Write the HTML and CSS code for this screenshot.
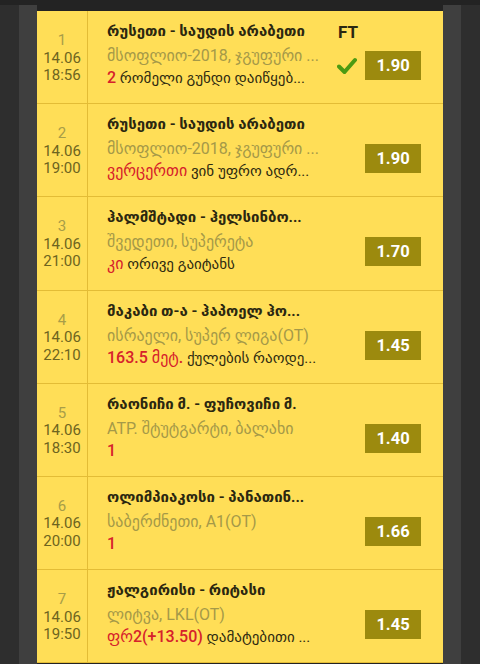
FILE: index.html
```html
<!DOCTYPE html>
<html>
<head>
<meta charset="utf-8">
<link rel="stylesheet" href="styles.css">
</head>
<body>
<div class="screen">
  <div class="side side-outer"></div>
  <div class="side side-inner"></div>
  <div class="main">
    <div class="list">
      <div class="row">
        <div class="num"><span class="idx">1</span><span>14.06</span><span>18:56</span></div>
        <div class="info">
          <div class="title">რუსეთი - საუდის არაბეთი</div>
          <div class="sub">მსოფლიო-2018, ჯგუფური ...</div>
          <div class="pick"><span class="red">2</span> რომელი გუნდი დაიწყებ...</div>
        </div>
        <div class="right">
          <div class="ft">FT</div>
          <div class="odds-line">
            <svg class="check" width="20" height="18" viewBox="0 0 20 18"><path d="M2 9.5 L7.5 15 L18 3" fill="none" stroke="#4c9a12" stroke-width="4" stroke-linecap="round" stroke-linejoin="round"/></svg>
            <div class="odd">1.90</div>
          </div>
        </div>
      </div>
      <div class="row">
        <div class="num"><span class="idx">2</span><span>14.06</span><span>19:00</span></div>
        <div class="info">
          <div class="title">რუსეთი - საუდის არაბეთი</div>
          <div class="sub">მსოფლიო-2018, ჯგუფური ...</div>
          <div class="pick"><span class="red">ვერცერთი</span> ვინ უფრო ადრ...</div>
        </div>
        <div class="right"><div class="odds-line"><div class="odd">1.90</div></div></div>
      </div>
      <div class="row">
        <div class="num"><span class="idx">3</span><span>14.06</span><span>21:00</span></div>
        <div class="info">
          <div class="title">ჰალმშტადი - ჰელსინბო...</div>
          <div class="sub">შვედეთი, სუპერეტა</div>
          <div class="pick"><span class="red">კი</span> ორივე გაიტანს</div>
        </div>
        <div class="right"><div class="odds-line"><div class="odd">1.70</div></div></div>
      </div>
      <div class="row">
        <div class="num"><span class="idx">4</span><span>14.06</span><span>22:10</span></div>
        <div class="info">
          <div class="title">მაკაბი თ-ა - ჰაპოელ ჰო...</div>
          <div class="sub">ისრაელი, სუპერ ლიგა(OT)</div>
          <div class="pick"><span class="red">163.5 მეტ.</span> ქულების რაოდე...</div>
        </div>
        <div class="right"><div class="odds-line"><div class="odd">1.45</div></div></div>
      </div>
      <div class="row">
        <div class="num"><span class="idx">5</span><span>14.06</span><span>18:30</span></div>
        <div class="info">
          <div class="title">რაონიჩი მ. - ფუჩოვიჩი მ.</div>
          <div class="sub">ATP. შტუტგარტი, ბალახი</div>
          <div class="pick"><span class="red">1</span></div>
        </div>
        <div class="right"><div class="odds-line"><div class="odd">1.40</div></div></div>
      </div>
      <div class="row">
        <div class="num"><span class="idx">6</span><span>14.06</span><span>20:00</span></div>
        <div class="info">
          <div class="title">ოლიმპიაკოსი - პანათინ...</div>
          <div class="sub">საბერძნეთი, A1(OT)</div>
          <div class="pick"><span class="red">1</span></div>
        </div>
        <div class="right"><div class="odds-line"><div class="odd">1.66</div></div></div>
      </div>
      <div class="row">
        <div class="num"><span class="idx">7</span><span>14.06</span><span>19:50</span></div>
        <div class="info">
          <div class="title">ჟალგირისი - რიტასი</div>
          <div class="sub">ლიტვა, LKL(OT)</div>
          <div class="pick"><span class="red">ფრ2(+13.50)</span> დამატებითი ...</div>
        </div>
        <div class="right"><div class="odds-line"><div class="odd">1.45</div></div></div>
      </div>
    </div>
  </div>
  <div class="side side-inner"></div>
  <div class="side side-outer"></div>
</div>
</body>
</html>
```

FILE: styles.css
```css
html, body {
  margin: 0;
  padding: 0;
  background: #232323;
  width: 480px;
  height: 664px;
  overflow: hidden;
}
.screen {
  display: grid;
  grid-template-columns: 19px 18px 406px 18px 19px;
  height: 659px;
  margin-top: 5px;
}
.side-outer { background: #2e2e2e; }
.side-inner { background: #3f3f3f; }
.main {
  padding-top: 6px;
  background: #232323;
}
.list {
  background: #ffde57;
  font-family: Roboto, "DejaVu Sans", sans-serif;
}
.row {
  display: flex;
  height: 92.2px;
  border-bottom: 1px solid #e3bc36;
}
.num {
  width: 51px;
  flex: none;
  border-right: 1px solid #e3bc36;
  display: flex;
  flex-direction: column;
  align-items: center;
  padding-top: 21px;
  box-sizing: border-box;
  font-size: 15px;
  line-height: 17.5px;
  color: #6d6420;
}
.num .idx { color: #a89d48; }
.info {
  flex: 1;
  min-width: 0;
  padding-left: 19px;
  padding-top: 9px;
  white-space: nowrap;
  overflow: hidden;
}
.title {
  font-size: 15px;
  font-weight: bold;
  color: #2b2710;
  line-height: 22px;
  height: 22px;
}
.sub {
  margin-top: 3px;
  font-size: 16px;
  color: #a59948;
  line-height: 21px;
}
.pick {
  font-size: 15px;
  color: #2e2a10;
  line-height: 24px;
}
.red { color: #d6212b; font-size: 16px; font-weight: 500; }
.right {
  width: 100px;
  flex: none;
  position: relative;
  padding-right: 22px;
  display: flex;
  flex-direction: column;
  align-items: flex-end;
  padding-top: 40px;
  box-sizing: border-box;
}
.ft {
  position: absolute;
  top: 11px;
  left: -5px;
  font-size: 17px;
  font-weight: bold;
  color: #2b2710;
  font-family: Roboto, sans-serif;
}
.odds-line {
  display: flex;
  align-items: center;
  gap: 8px;
}
.check { display: block; }
.odd {
  width: 56px;
  height: 29px;
  background: #9c8a0e;
  color: #fff;
  font-weight: bold;
  font-size: 16.5px;
  line-height: 29px;
  text-align: center;
  font-family: Roboto, sans-serif;
}
```
